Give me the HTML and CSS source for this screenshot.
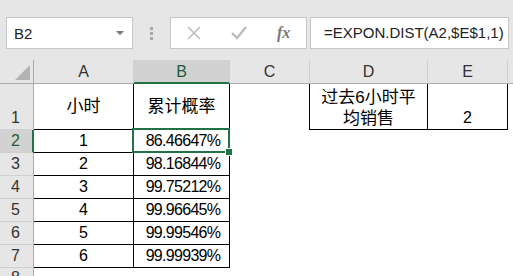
FILE: index.html
```html
<!DOCTYPE html>
<html lang="zh-CN">
<head>
    <meta charset="UTF-8">
    <title>EXPON.DIST</title>
    <link rel="stylesheet" href="styles.css">
</head>
<body>
    <div class="toolbar">
        <div class="name-box">
            <span>B2</span>
            <span class="caret"></span>
        </div>
        <div class="grip"><i></i><i></i><i></i></div>
        <div class="func-box">
            <svg class="icon" width="16" height="16" viewBox="0 0 16 16">
                <path d="M2 2 L14 14 M14 2 L2 14" stroke="#bdbdbd" stroke-width="1.6" fill="none"/>
            </svg>
            <svg class="icon" width="18" height="16" viewBox="0 0 18 16">
                <path d="M2 8 L7 13 L16 2" stroke="#bdbdbd" stroke-width="2.4" fill="none"/>
            </svg>
            <span class="fx">fx</span>
        </div>
        <div class="formula">=EXPON.DIST(A2,$E$1,1)</div>
    </div>

    <div class="sheet">
        <div class="corner"><span class="tri"></span></div>
        <div class="col-head">A</div>
        <div class="col-head active">B</div>
        <div class="col-head">C</div>
        <div class="col-head">D</div>
        <div class="col-head">E</div>
        <div class="col-head last"></div>

        <div class="row-head">1</div>
        <div class="cell boxed mid">小时</div>
        <div class="cell boxed mid">累计概率</div>
        <div class="cell edge"></div>
        <div class="cell boxed wrap">过去6小时平<br>均销售</div>
        <div class="cell boxed">2</div>
        <div class="cell"></div>

        <div class="row-head active">2</div>
        <div class="cell boxed">1</div>
        <div class="cell boxed num selected">86.46647%</div>
        <div class="cell"></div><div class="cell"></div><div class="cell"></div><div class="cell"></div>

        <div class="row-head">3</div>
        <div class="cell boxed">2</div>
        <div class="cell boxed num">98.16844%</div>
        <div class="cell"></div><div class="cell"></div><div class="cell"></div><div class="cell"></div>

        <div class="row-head">4</div>
        <div class="cell boxed">3</div>
        <div class="cell boxed num">99.75212%</div>
        <div class="cell"></div><div class="cell"></div><div class="cell"></div><div class="cell"></div>

        <div class="row-head">5</div>
        <div class="cell boxed">4</div>
        <div class="cell boxed num">99.96645%</div>
        <div class="cell"></div><div class="cell"></div><div class="cell"></div><div class="cell"></div>

        <div class="row-head">6</div>
        <div class="cell boxed">5</div>
        <div class="cell boxed num">99.99546%</div>
        <div class="cell"></div><div class="cell"></div><div class="cell"></div><div class="cell"></div>

        <div class="row-head">7</div>
        <div class="cell boxed">6</div>
        <div class="cell boxed num">99.99939%</div>
        <div class="cell"></div><div class="cell"></div><div class="cell"></div><div class="cell"></div>

        <div class="row-head">8</div>
        <div class="cell"></div><div class="cell"></div><div class="cell"></div>
        <div class="cell"></div><div class="cell"></div><div class="cell"></div>
    </div>
</body>
</html>
```
FILE: styles.css
```css
* {
    box-sizing: border-box;
    margin: 0;
    padding: 0;
}

body {
    width: 513px;
    height: 276px;
    overflow: hidden;
    background-color: #fff;
    font-family: 'Liberation Sans', 'Noto Sans CJK SC', sans-serif;
    color: #000;
}

/* formula bar */
.toolbar {
    height: 60px;
    background-color: #e6e6e6;
    display: flex;
    align-items: flex-start;
    padding: 17px 0 0 6px;
}

.name-box {
    width: 127px;
    height: 32px;
    background-color: #fff;
    border: 1px solid #c6c6c6;
    display: flex;
    align-items: center;
    justify-content: space-between;
    padding: 0 8px 0 7px;
    font-size: 15px;
    color: #222;
}

.caret {
    width: 0;
    height: 0;
    border-left: 4px solid transparent;
    border-right: 4px solid transparent;
    border-top: 4px solid #777;
}

.grip {
    width: 37px;
    height: 32px;
    display: flex;
    flex-direction: column;
    align-items: center;
    justify-content: center;
    gap: 2px;
}

.grip i {
    width: 3px;
    height: 3px;
    background-color: #a8a8a8;
}

.func-box {
    width: 137px;
    height: 32px;
    background-color: #fff;
    border: 1px solid #c6c6c6;
    display: flex;
    align-items: center;
    padding-left: 15px;
    gap: 28px;
}

.func-box .icon {
    flex-shrink: 0;
}

.fx {
    font-family: 'Liberation Serif', serif;
    font-style: italic;
    font-weight: bold;
    font-size: 16px;
    color: #7a7a7a;
    margin-left: 1px;
}

.formula {
    width: 199px;
    height: 32px;
    margin-left: 3px;
    background-color: #fff;
    border: 1px solid #c6c6c6;
    padding-left: 13px;
    font-size: 15px;
    line-height: 30px;
    color: #222;
    white-space: nowrap;
}

/* sheet */
.sheet {
    display: grid;
    grid-template-columns: 34px 100px 96px 80px 118px 80px 1fr;
    grid-template-rows: 24px 46px repeat(6, 23px) 1fr;
    height: 216px;
    font-size: 16px;
}

.corner {
    background-color: #e6e6e6;
    border-right: 1px solid #ababab;
    border-bottom: 1px solid #ababab;
    position: relative;
}

.tri {
    position: absolute;
    right: 3px;
    bottom: 3px;
    width: 0;
    height: 0;
    border-left: 15px solid transparent;
    border-bottom: 15px solid #b2b2b2;
}

.col-head {
    background-color: #e6e6e6;
    border-right: 1px solid #d0d0d0;
    border-bottom: 1px solid #ababab;
    text-align: center;
    line-height: 23px;
    color: #333;
}

.col-head.last {
    border-right: none;
}

.col-head.active {
    background-color: #d2d2d2;
    color: #1e5c38;
    border-bottom: 2px solid #217346;
}

.row-head {
    background-color: #e6e6e6;
    border-right: 1px solid #ababab;
    border-bottom: 1px solid #d0d0d0;
    display: flex;
    align-items: flex-end;
    padding: 0 0 1px 11px;
    line-height: 20px;
    color: #333;
}

.row-head.active {
    background-color: #d2d2d2;
    color: #1e5c38;
    border-right: 2px solid #217346;
}

.cell {
    display: flex;
    align-items: flex-end;
    justify-content: center;
    line-height: 21px;
    padding-bottom: 1px;
    white-space: nowrap;
}

.cell.boxed {
    border-right: 1px solid #000;
    border-bottom: 1px solid #000;
}

.cell.edge {
    border-right: 1px solid #000;
}

.cell.mid {
    align-items: center;
    font-size: 17px;
    padding-bottom: 0;
}

.cell.wrap {
    text-align: center;
    line-height: 21px;
    font-size: 17px;
    padding-bottom: 0;
}

.cell.num {
    letter-spacing: -0.7px;
    padding-left: 3px;
}

.cell.selected {
    position: relative;
}

.cell.selected::after {
    content: '';
    position: absolute;
    top: -2px;
    left: -2px;
    right: -1px;
    bottom: -1px;
    border: 2px solid #217346;
}

.cell.selected::before {
    content: '';
    position: absolute;
    right: -4px;
    bottom: -4px;
    width: 6px;
    height: 6px;
    background-color: #217346;
    border: 1px solid #fff;
    z-index: 1;
}
```
